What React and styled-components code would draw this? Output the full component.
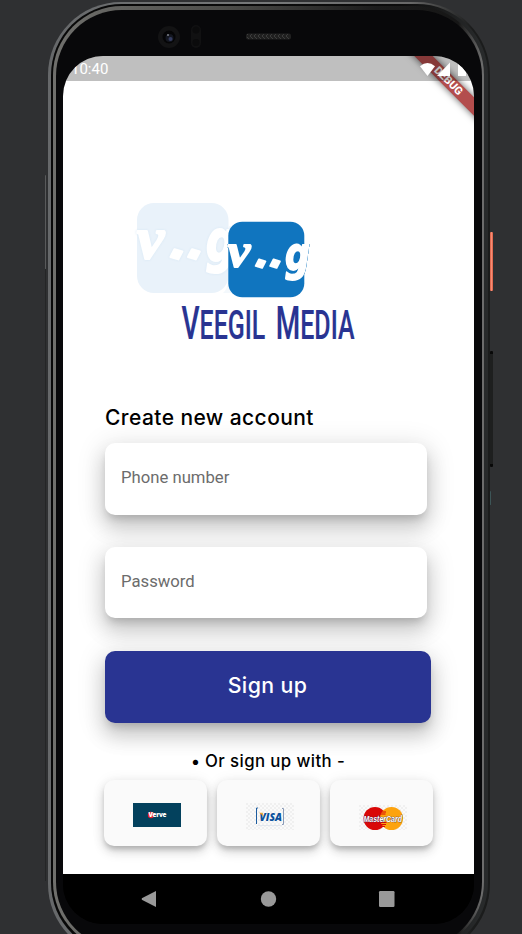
import React from "react";
import styled, { createGlobalStyle } from "styled-components";

const GlobalStyle = createGlobalStyle`
  * { box-sizing: border-box; }
  html, body { margin: 0; padding: 0; overflow: hidden; background: #2f3032; }
`;

const display = `"Inter", "Open Sans", sans-serif`;
const body = `"Roboto", "Noto Sans", sans-serif`;

const Stage = styled.main`
  display: flex;
  width: 522px;
  height: 934px;
  overflow: hidden;
  background: #2f3032;
  font-family: ${body};
`;

const LeftRail = styled.div`
  display: flex;
  flex-direction: column;
  align-items: flex-end;
  flex: 0 0 48px;
  padding: 175px 2px 0 0;
`;

const RightRail = styled.div`
  display: flex;
  flex-direction: column;
  align-items: flex-start;
  flex: 0 0 32px;
  padding-top: 232px;
`;

const SideKey = styled.div`
  flex: none;
  width: ${(p) => p.$width}px;
  height: ${(p) => p.$height}px;
  margin-top: ${(p) => p.$gap || 0}px;
  border-radius: 1px;
  background: ${(p) => p.$fill};
`;

const OuterRim = styled.div`
  flex: 0 0 442px;
  height: 955px;
  margin-top: 2px;
  padding: 2px 2px 3px 3px;
  border-radius: 73px;
  background: linear-gradient(90deg, #66686a 0, #77797a 50%, #686868 82%, #1b1c1c 96%);
`;

const Groove = styled.div`
  height: 100%;
  padding: 2px 4px 3px 2px;
  border-radius: 71px;
  background: linear-gradient(90deg, #080808 0, #0c0c0c 80%, #282a2b 98%);
`;

const InnerRim = styled.div`
  height: 100%;
  padding: 4px 2px 3px 3px;
  border-radius: 69px;
  background: linear-gradient(90deg, #70706d 0, #4c4c49 40%, #1c1c1c 75%, #161616 94%, #6c6c6c 99.5%);
`;

const Bezel = styled.div`
  display: flex;
  flex-direction: column;
  height: 100%;
  padding: 0 8px 0 7px;
  border-radius: 66px;
  background: #08080a;
`;

const SensorBar = styled.div`
  display: flex;
  flex: 0 0 46px;
  padding: 14px 0 0 95px;
`;

const Screen = styled.div`
  position: relative;
  display: flex;
  flex-direction: column;
  width: 411px;
  height: 868px;
  border-radius: 40px;
  overflow: hidden;
  background: linear-gradient(#fff 800px, #000 800px);
`;

const StatusBar = styled.header`
  position: relative;
  z-index: 2;
  display: flex;
  flex: 0 0 25px;
  align-items: center;
  justify-content: space-between;
  padding: 1px 5px 0 8px;
  background: rgba(0, 0, 0, 0.25);
  color: #fff;
  font-size: 15px;
  line-height: 20px;
`;

const DebugRibbon = styled.div`
  position: absolute;
  z-index: 1;
  top: 17px;
  right: -38px;
  width: 130px;
  height: 13px;
  padding-left: 4px;
  background: #b34d4d;
  box-shadow: 0 0 6px 1px rgba(0, 0, 0, 0.5);
  color: #fff;
  font: 800 11px/13px ${body};
  text-align: center;
  transform: rotate(45deg);
`;

const Content = styled.section`
  display: flex;
  flex-direction: column;
  flex: 1;
  padding: 121px 38px 0 41px;
  background: linear-gradient(#fff, #fff) 0 60px no-repeat;
`;

const Brand = styled.svg`
  flex: none;
  display: block;
  width: 226px;
  height: 152px;
  margin-left: 30px;
  overflow: visible;
`;

const Heading = styled.h1`
  margin: 51px 0 0 1px;
  color: #000;
  font: 500 21px/26px ${display};
  letter-spacing: 0.42px;
  white-space: nowrap;
`;

const lift = `0 6px 9px -3px rgba(0,0,0,.17), 0 13px 20px 1px rgba(0,0,0,.15), 0 5px 26px 5px rgba(0,0,0,.1)`;

const Field = styled.label`
  display: grid;
  flex: none;
  align-items: center;
  width: 322px;
  height: ${(p) => p.$height}px;
  margin: ${(p) => p.$gap}px 0 0 1px;
  padding: 0 16px ${(p) => p.$lift}px;
  border-radius: 10px;
  background: #fff;
  box-shadow: ${lift};
`;

const FieldLabel = styled.span`
  grid-area: 1 / 1;
  color: #6c6c6c;
  font-size: 16.7px;
  line-height: 20px;
`;

const FieldInput = styled.input`
  grid-area: 1 / 1;
  width: 100%;
  height: 40px;
  border: 0;
  outline: 0;
  background: transparent;
  font: 16.7px ${body};
`;

const SubmitButton = styled.button`
  flex: none;
  width: 326px;
  height: 72px;
  margin: 33px 0 0 1px;
  padding: 0 1px 5px 0;
  border: 0;
  border-radius: 10px;
  background: #293492;
  box-shadow: ${lift};
  color: #fff;
  font: 500 21.3px/28px ${display};
  letter-spacing: 0.4px;
`;

const Divider = styled.p`
  margin: 28px 4px 8px 0;
  color: #000;
  font: 500 16.8px/21px ${display};
  letter-spacing: 0.4px;
  text-align: center;
  white-space: nowrap;
`;

const Providers = styled.div`
  display: flex;
  gap: 10px;
`;

const ProviderCard = styled.button`
  display: flex;
  align-items: center;
  justify-content: center;
  width: 103px;
  height: 66px;
  padding: ${(p) => p.$drop}px 0 0 3px;
  border: 0;
  border-radius: 10px;
  background: #fafafa;
  box-shadow: 0 4px 5px -1px rgba(0, 0, 0, 0.18), 0 6px 12px rgba(0, 0, 0, 0.14), 0 1px 14px rgba(0, 0, 0, 0.08);
`;

const NavBar = styled.nav`
  display: flex;
  flex: 0 0 50px;
  justify-content: space-between;
  padding: 17px 79px 0 78px;
  background: #000;
`;

const Glyph = styled.svg`
  display: block;
  flex: none;
  overflow: visible;
`;

function Sensors() {
  return (
    <SensorBar>
      <Glyph width="150" height="26" viewBox="0 0 150 26">
        <defs>
          <pattern id="mesh" width="4" height="6" patternUnits="userSpaceOnUse">
            <path d="M0 0l3 3-3 3" stroke="#3d3d3d" fill="none" />
          </pattern>
        </defs>
        <circle cx="11" cy="13" r="11" fill="#131314" />
        <circle cx="11" cy="13" r="6.500" fill="#050506" />
        <circle cx="11.500" cy="14" r="4" fill="#141720" />
        <circle cx="12.500" cy="15" r="2" fill="#343c60" />
        <circle cx="10" cy="11" r=".8" fill="#c9cdd4" />
        <rect x="33" y="1" width="10" height="23" rx="5" fill="#111112" />
        <circle cx="38" cy="6" r="3.500" fill="#0b0b0c" />
        <circle cx="38" cy="18.500" r="3.500" fill="#0b0b0c" />
        <rect x="88" y="9.500" width="45" height="6" rx="2" fill="#202020" />
        <rect x="89" y="10" width="43" height="5" fill="url(#mesh)" />
      </Glyph>
    </SensorBar>
  );
}

function StatusIcons() {
  return (
    <Glyph width="49" height="15" viewBox="0 0 49 15" fill="#fff">
      <path d="M0 4.200Q7.500-2.200 15 4.200L7.500 14z" />
      <path d="M30 .5V14H17z" />
      <path d="M38 2h2V.5h4V2h2v12h-8z" />
    </Glyph>
  );
}

function BrandMark() {
  return (
    <Brand viewBox="134 202 226 152">
      <defs>
        <g id="wordmark" fill="#fff" stroke="#fff" strokeWidth="1.800" strokeLinejoin="round" fontFamily="DejaVu Sans, sans-serif" fontWeight="700" fontStyle="italic">
          <text transform="translate(227.500 266.500) scale(1.050 1)" fontSize="49" fontFamily="Liberation Serif, serif">v</text>
          <text transform="translate(254 265.500) rotate(16)" fontSize="38">.</text>
          <text transform="translate(268.500 265.500) rotate(16)" fontSize="38">.</text>
          <text transform="translate(285 269.500) scale(.740 1)" fontSize="47">g</text>
        </g>
      </defs>
      <rect x="137" y="203" width="91.500" height="90" rx="17" fill="#e9f2fa" />
      <path d="M228 226h9v67h-14q5-4 5-14z" fill="#f3f8fc" />
      <use href="#wordmark" transform="translate(-137.500 -63.500) scale(1.205)" filter="drop-shadow(0 0 .7px #d6e7f5)" />
      <rect x="228.300" y="221.700" width="76" height="75.600" rx="14" fill="#1075bf" />
      <use href="#wordmark" filter="drop-shadow(0 0 .6px #1075bf) drop-shadow(0 0 .7px #1075bf)" />
      <text x="181.500" y="339" fill="#293492" stroke="#293492" strokeWidth=".2" fontFamily="Roboto, sans-serif" fontWeight="500" fontSize="41" wordSpacing="7" textLength="173" lengthAdjust="spacingAndGlyphs">
        <tspan fontSize="46">V</tspan>EEGIL <tspan fontSize="46">M</tspan>EDIA
      </text>
    </Brand>
  );
}

function Checker({ id }) {
  return (
    <pattern id={id} width="4" height="4" patternUnits="userSpaceOnUse">
      <rect width="4" height="4" fill="#fafafa" />
      <path d="M0 0h2v2H0zM2 2h2v2H2z" fill="#f0f0f0" />
    </pattern>
  );
}

function Verve() {
  return (
    <Glyph width="48" height="24" viewBox="0 0 48 24">
      <rect width="48" height="24" fill="#03415d" />
      <circle cx="18" cy="12" r="3.200" fill="#e9232b" />
      <text x="15.500" y="14.300" fill="#fff" fontFamily="Open Sans, sans-serif" fontWeight="800" fontSize="6.300" textLength="18" lengthAdjust="spacing">Verve</text>
    </Glyph>
  );
}

function Visa() {
  return (
    <Glyph width="48" height="27" viewBox="0 0 48 27">
      <defs><Checker id="visaGrid" /></defs>
      <rect width="48" height="27" fill="url(#visaGrid)" />
      <path d="M12 5h-1.500v16" fill="none" stroke="#1c5c9f" />
      <path d="M36 5.500h1.500v16H36" fill="none" stroke="#8a9bb8" />
      <path d="M12 22.500h24" stroke="#e3e7ee" />
      <text x="13.500" y="17.500" fill="#0b519c" fontFamily="Open Sans, sans-serif" fontStyle="italic" fontWeight="800" fontSize="11" textLength="22.500" lengthAdjust="spacingAndGlyphs">VISA</text>
      <path d="M13 9.700h3.500l1 4q-1.500-2.500-4.500-4z" fill="#f5a623" />
    </Glyph>
  );
}

function MasterCard() {
  return (
    <Glyph width="48" height="25" viewBox="0 0 48 25">
      <defs><Checker id="masterGrid" /></defs>
      <rect width="48" height="25" fill="url(#masterGrid)" />
      <circle cx="16" cy="13.500" r="11.500" fill="#d90707" />
      <circle cx="32.500" cy="13.500" r="11.500" fill="#fda30d" />
      <path d="M21 7h6M20.500 9h6M20.500 17.500h7M21 19.500h6M22 21.500h4" stroke="#d90707" />
      <text x="4.500" y="16.800" fill="#fff" stroke="#28245e" strokeWidth=".6" paintOrder="stroke" fontFamily="Liberation Sans, sans-serif" fontWeight="700" fontStyle="italic" fontSize="9.500" textLength="38.500" lengthAdjust="spacingAndGlyphs">MasterCard</text>
    </Glyph>
  );
}

function Navigation() {
  return (
    <NavBar>
      <Glyph width="16" height="16" viewBox="0 0 16 16"><path d="M15 0v16L.8 8.700V7.300z" fill="#999" /></Glyph>
      <Glyph width="16" height="16" viewBox="0 0 16 16"><circle cx="8.500" cy="8" r="7.700" fill="#999" /></Glyph>
      <Glyph width="16" height="16" viewBox="0 0 16 16"><rect width="15.500" height="16" rx="1.200" fill="#999" /></Glyph>
    </NavBar>
  );
}

export default function App() {
  return (
    <Stage>
      <GlobalStyle />
      <LeftRail>
        <SideKey $width={1} $height={94} $fill="#595a5b" />
        <SideKey $width={1} $height={612} $fill="#242526" />
      </LeftRail>
      <OuterRim>
        <Groove>
          <InnerRim>
            <Bezel>
              <Sensors />
              <Screen>
                <StatusBar>
                  <span>10:40</span>
                  <StatusIcons />
                </StatusBar>
                <DebugRibbon>DEBUG</DebugRibbon>
                <Content>
                  <BrandMark />
                  <Heading>Create new account</Heading>
                  <Field $height={72} $gap={12} $lift={2}>
                    <FieldLabel>Phone number</FieldLabel>
                    <FieldInput type="tel" />
                  </Field>
                  <Field $height={71} $gap={32} $lift={1}>
                    <FieldLabel>Password</FieldLabel>
                    <FieldInput type="password" />
                  </Field>
                  <SubmitButton>Sign up</SubmitButton>
                  <Divider>• Or sign up with -</Divider>
                  <Providers>
                    <ProviderCard $drop={4}><Verve /></ProviderCard>
                    <ProviderCard $drop={7}><Visa /></ProviderCard>
                    <ProviderCard $drop={9}><MasterCard /></ProviderCard>
                  </Providers>
                </Content>
                <Navigation />
              </Screen>
            </Bezel>
          </InnerRim>
        </Groove>
      </OuterRim>
      <RightRail>
        <SideKey $width={3} $height={59} $fill="linear-gradient(90deg, #d9583f, #f58d74, #d9583f)" />
        <SideKey $width={3} $height={116} $gap={60} $fill="linear-gradient(#080808 0 3%, #1e1f1f 3% 97%, #080808 97%)" />
        <SideKey $width={1} $height={14} $gap={24} $fill="#3d5557" />
      </RightRail>
    </Stage>
  );
}
